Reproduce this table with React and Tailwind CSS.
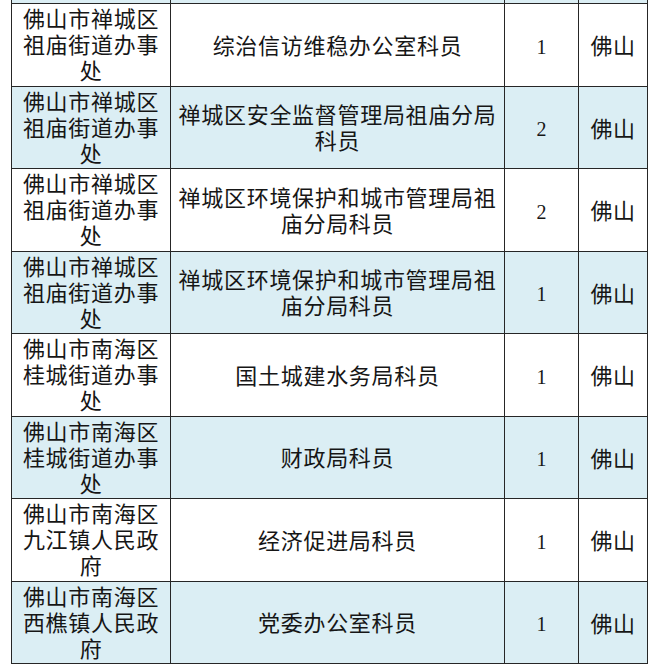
const rows = [
  { a: "佛山市禅城区祖庙街道办事处", b: "", n: "", c: "", blue: true },
  { a: "佛山市禅城区祖庙街道办事处", b: "综治信访维稳办公室科员", n: "1", c: "佛山", blue: false },
  { a: "佛山市禅城区祖庙街道办事处", b: "禅城区安全监督管理局祖庙分局科员", n: "2", c: "佛山", blue: true },
  { a: "佛山市禅城区祖庙街道办事处", b: "禅城区环境保护和城市管理局祖庙分局科员", n: "2", c: "佛山", blue: false },
  { a: "佛山市禅城区祖庙街道办事处", b: "禅城区环境保护和城市管理局祖庙分局科员", n: "1", c: "佛山", blue: true },
  { a: "佛山市南海区桂城街道办事处", b: "国土城建水务局科员", n: "1", c: "佛山", blue: false },
  { a: "佛山市南海区桂城街道办事处", b: "财政局科员", n: "1", c: "佛山", blue: true },
  { a: "佛山市南海区九江镇人民政府", b: "经济促进局科员", n: "1", c: "佛山", blue: false },
  { a: "佛山市南海区西樵镇人民政府", b: "党委办公室科员", n: "1", c: "佛山", blue: true },
];

export default function App() {
  return (
    <div className="w-[653px] h-[666px] overflow-hidden bg-white text-[#161616] font-['Liberation_Serif','Noto_Sans_CJK_SC',serif]">
      <div className="ml-[11px] w-[637px] -mt-[78.5px] border-l-[1.5px] border-r-[1.5px] border-[#262626]">
        {rows.map((r, i) => (
          <div
            key={i}
            className={`grid grid-cols-[159px_334px_74px_68px] h-[82.5px] border-b-[1.5px] border-[#262626] ${r.blue ? "bg-[#dbeef4]" : "bg-white"}`}
          >
            <div className="flex items-center justify-center text-center border-r-[1.5px] border-[#262626] px-1 pt-[3px] text-[22px] leading-[26px] tracking-[0.7px]">
              {r.a}
            </div>
            <div className="flex items-center justify-center text-center border-r-[1.5px] border-[#262626] px-1 pt-[4px] text-[22px] leading-[26px] tracking-[0.7px]">
              {r.b}
            </div>
            <div className="flex items-center justify-center border-r-[1.5px] border-[#262626] pt-[4px] text-[20px]">
              {r.n}
            </div>
            <div className="flex items-center justify-center pt-[4px] text-[22px] tracking-[0.5px]">
              {r.c}
            </div>
          </div>
        ))}
      </div>
    </div>
  );
}
